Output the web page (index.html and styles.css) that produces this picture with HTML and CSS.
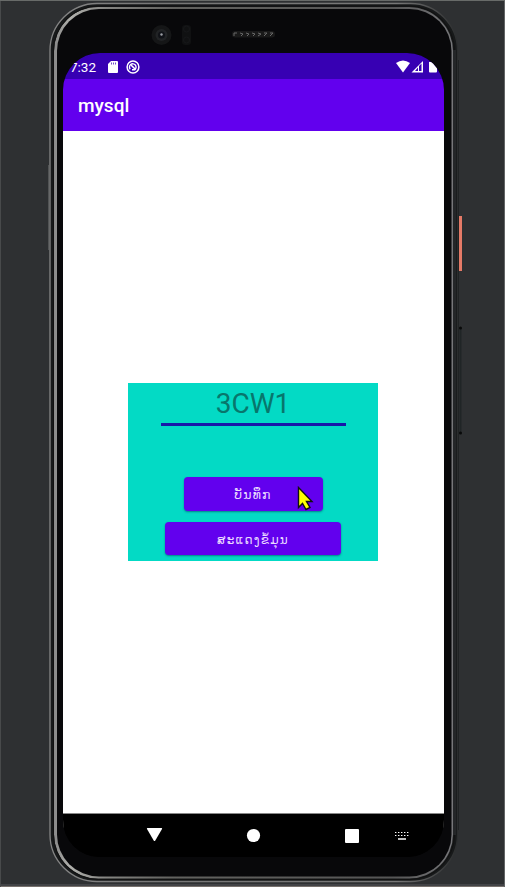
FILE: index.html
```html
<!DOCTYPE html>
<html lang="lo">
<head>
<meta charset="utf-8">
<title>mysql</title>
<link rel="stylesheet" href="styles.css">
</head>
<body>
<div class="desktop">
  <svg class="phone-body" viewBox="0 0 505 887" aria-hidden="true">
    <defs>
      <linearGradient id="rim" x1="0" y1="0" x2="1" y2="0">
        <stop offset="0" stop-color="#858585"/><stop offset=".25" stop-color="#777"/>
        <stop offset=".85" stop-color="#777"/><stop offset="1" stop-color="#2b2d2e"/>
      </linearGradient>
      <linearGradient id="edge" x1="0" y1="0" x2="1" y2="0">
        <stop offset="0" stop-color="#888"/><stop offset=".04" stop-color="#b0b0ac"/>
        <stop offset=".13" stop-color="#858582"/><stop offset=".3" stop-color="#62625f"/>
        <stop offset=".85" stop-color="#555"/><stop offset="1" stop-color="#77777a"/>
      </linearGradient>
    </defs>
    <path d="M48.500 165V250" stroke="#515354"/>
    <rect x="50" y="3.500" width="407.500" height="878" rx="47" fill="#17191a" stroke="url(#rim)" stroke-width="1.300"/>
    <rect x="54" y="7" width="399" height="871.500" rx="44" fill="url(#edge)"/>
    <rect x="53.500" y="6" width="401" height="873.500" rx="45" fill="none" stroke="#111"/>
    <rect x="57" y="9" width="394.500" height="867.500" rx="42" fill="#08080a"/>
    <path d="M454.500 50V835" stroke="#242628" stroke-width="3"/>
    <path d="M458.500 60V830" stroke="#202324"/>
    <path d="M460.500 328V433" stroke="#202526" stroke-width="2"/>
    <circle cx="460.500" cy="328" r="1.500" fill="#080909"/>
    <circle cx="460.500" cy="433" r="1.500" fill="#080909"/>
    <rect x="459" y="216" width="3" height="55" fill="#e57a67"/>
    <circle cx="161.500" cy="35" r="10" fill="#151617"/>
    <circle cx="161.500" cy="35" r="6" fill="#212325"/>
    <circle cx="161.500" cy="35" r="3.500" fill="#101217"/>
    <circle cx="161.500" cy="34.500" r="1.200" fill="#9b9fa5"/>
    <rect x="182" y="25" width="9" height="20" rx="3" fill="#101112"/>
    <circle cx="186.500" cy="29" r="3" fill="none" stroke="#17181a"/>
    <circle cx="186.500" cy="40" r="3" fill="none" stroke="#17181a"/>
    <rect x="232" y="31" width="43" height="6.500" rx="3" fill="#191919"/>
    <path d="M234 36v-3h3M240 33l3 1-2 2M246 33l3 1-2 2M252 33l3 1-2 2M258 33l3 1-3 2M264 33h3l-3 3M270 33h3l-3 3" fill="none" stroke="#686868"/>
  </svg>
  <main class="screen">
    <div class="status">
      <span class="time">7:32</span>
      <svg class="sd" viewBox="0 0 10 12"><path d="M3 0h6q1 0 1 1v10q0 1-1 1H1q-1 0-1-1V3z" fill="#fff"/><path d="M3.500 1.500v2M5.500 1.500v2M7.500 1.500v2" stroke="#3700b3" stroke-width=".7"/></svg>
      <svg class="debug" viewBox="0 0 14 14" fill="none" stroke="#fff"><circle cx="7" cy="7" r="5.900" stroke-width="1.500"/><path d="M4.200 9.200A3.300 3.300 0 1 1 8.800 9.700H6" stroke-width="1.400"/><path d="M5 5l4.500 4.500" stroke-width="1.600"/></svg>
      <svg class="signals" viewBox="0 0 42 13"><path d="M0 3Q7-2 14 3L7 12.500z" fill="#fff"/><path d="M27 1v11.500H15.500z" fill="#fff"/><path d="M22 7.500V11H19zM23 6l2.500-2.500V11H23z" fill="#3700b3"/><path d="M33 2h2V1h3v1h3v9.500q0 1-1 1h-6q-1 0-1-1z" fill="#fff"/></svg>
    </div>
    <header class="appbar">mysql</header>
    <section class="content">
      <div class="panel">
        <div class="field">3CW1</div>
        <div class="button save">ບັນທຶກ</div>
        <div class="button show">ສະແດງຂໍ້ມຸນ</div>
      </div>
    </section>
    <nav class="nav">
      <svg viewBox="0 0 381 43" aria-hidden="true" fill="#fff">
        <path d="M84.500 14h14q1 0 .5 1l-6.700 11.500q-.8 1-1.600 0L84 15q-.5-1 .5-1z"/>
        <circle cx="190.500" cy="21.500" r="6.600"/>
        <rect x="282" y="15" width="14" height="14" rx="1"/>
        <path d="M332 18.500h14M332 21.500h14" stroke="#fff" stroke-width="1.200" stroke-dasharray="1.400 1.600"/>
        <path d="M335 25h8" stroke="#fff" stroke-width="1.400"/>
      </svg>
    </nav>
  </main>
  <svg class="cursor" viewBox="0 0 18 26"><path d="M1.500 1.500v20l4-4 3.500 6 4-2-3.500-6h5.500z" fill="#ff0" stroke="#111" stroke-width="1.400"/></svg>
</div>
</body>
</html>
```
FILE: styles.css
```css
* { box-sizing: border-box; }
body { margin: 0; font-family: Roboto, "DejaVu Sans", sans-serif; }
.desktop {
  position: relative;
  width: 505px;
  height: 887px;
  padding: 53px 61px 30px 63px;
  background: #2e3032;
  box-shadow: inset 0 1px #686b69, inset -1px 0 #626465, inset 1px 0 #484a4b, inset 0 -1px #77716d, inset 0 -3px #424346;
  overflow: hidden;
}
.phone-body { position: absolute; left: 0; top: 0; width: 505px; height: 887px; }
.screen {
  position: relative;
  display: flex;
  flex-direction: column;
  width: 381px;
  height: 804px;
  border-radius: 37px;
  overflow: hidden;
  background: #000;
}
.status {
  display: flex;
  align-items: center;
  height: 26px;
  padding: 1px 0 0 7px;
  background: #3700b3;
  color: #fff;
}
.time { width: 38px; font-size: 13.5px; line-height: 26px; white-space: nowrap; }
.sd { width: 10px; height: 12px; margin-right: 8px; }
.debug { width: 14px; height: 14px; }
.signals { width: 42px; height: 13px; margin-left: auto; margin-right: 6px; }
.appbar {
  height: 52px;
  padding-left: 15px;
  background: #6200ee;
  color: #fff;
  font-size: 19px;
  font-weight: 500;
  line-height: 54px;
}
.content { flex: 1; padding: 252px 66px 0 65px; background: #fff; }
.panel {
  display: flex;
  flex-direction: column;
  align-items: center;
  width: 250px;
  height: 178px;
  background: #03dac5;
}
.field {
  width: 185px;
  height: 43px;
  margin-bottom: 51px;
  border-bottom: 3px solid #1818a8;
  color: #08766c;
  font-size: 28px;
  line-height: 41px;
  text-align: center;
}
.button {
  height: 34px;
  border-radius: 4px;
  background: #6200ee;
  box-shadow: 0 1px 2px rgba(0, 40, 80, .5);
  color: #eadcff;
  font: 12px/36px "DejaVu Sans", sans-serif;
  letter-spacing: 1.2px;
  text-align: center;
}
.save { width: 139px; margin-bottom: 11px; font-size: 12.5px; }
.show { width: 176px; height: 33px; }
.nav { height: 43px; background: #000; box-shadow: 0 -1px #888; }
.nav svg { display: block; width: 381px; height: 43px; }
.cursor { position: absolute; left: 297px; top: 486px; width: 18px; height: 26px; }
```
